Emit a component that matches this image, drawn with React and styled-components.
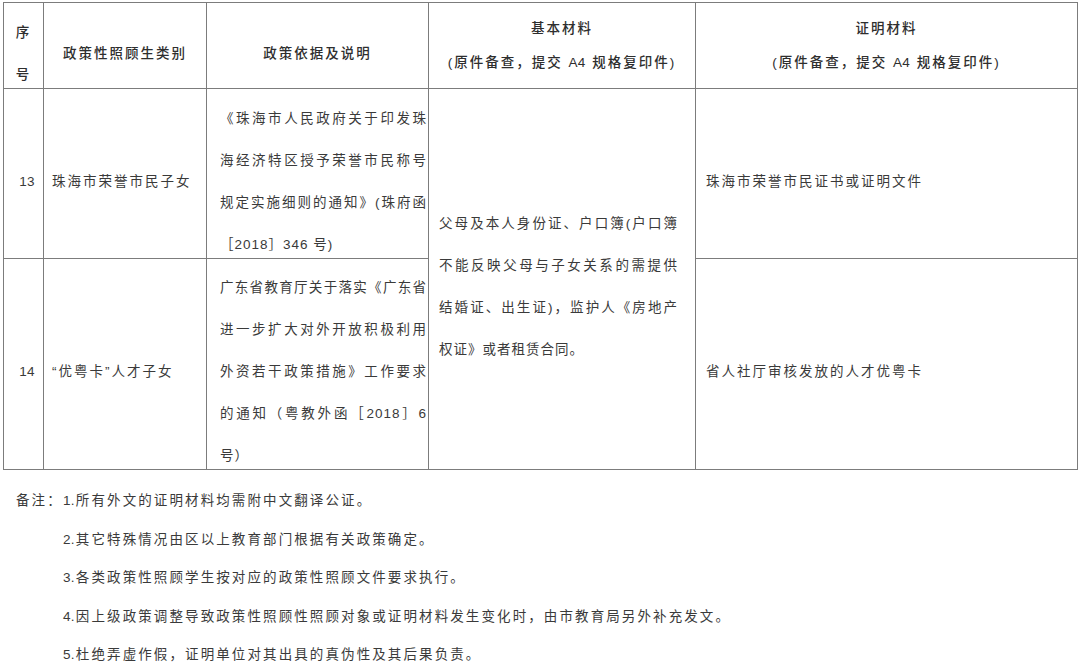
import React from 'react';
import styled, { createGlobalStyle } from 'styled-components';

const GlobalStyle = createGlobalStyle`
  html, body {
    margin: 0;
    padding: 0;
    background: #fff;
  }
  body {
    font-family: "Liberation Sans", "Noto Sans CJK SC", sans-serif;
    color: #3a3a3a;
  }
`;

const Page = styled.div`
  padding: 2px 0 0 3px;
`;

const Table = styled.table`
  border-collapse: collapse;
  table-layout: fixed;
  width: 1074px;
  font-size: 13.5px;
`;

const Col = styled.col`
  width: ${p => p.$w}px;
`;

const Row = styled.tr`
  height: ${p => p.$h}px;
`;

const HeadCell = styled.th`
  border: 1px solid #7c7c7c;
  padding: 0;
  text-align: center;
  vertical-align: middle;
  font-weight: 500;
  color: #2e2e2e;
  letter-spacing: 2px;
  line-height: ${p => p.$lh || 42}px;
`;

const HeadText = styled.div`
  margin: ${p => (p.$shift ? '8px 0 -8px' : '0')};
`;

const Cell = styled.td`
  border: 1px solid #7c7c7c;
  padding: 0 ${p => p.$pr || 0}px 0 ${p => p.$pl || 0}px;
  text-align: ${p => p.$align || 'left'};
  vertical-align: middle;
`;

const Lines = styled.div`
  line-height: 42px;
  margin: 8px 0 -8px;
  letter-spacing: ${p => p.$ls ?? 2}px;
`;

const Line = styled.div`
  text-align-last: ${p => (p.$fill ? 'justify' : 'auto')};
`;

const Num = styled.span`
  letter-spacing: 0.3px;
  margin-right: 1px;
`;

const Notes = styled.div`
  display: grid;
  grid-template-columns: 47px 1fr;
  margin-top: 12px;
  padding-left: 13px;
  font-size: 13.5px;
  letter-spacing: 2.1px;
  line-height: 38.5px;
`;

const NoteLabel = styled.div`
  white-space: nowrap;
`;

const NoteList = styled.div`
  display: flex;
  flex-direction: column;
`;

const Para = ({ lines, fill = [], ls }) => (
  <Lines $ls={ls}>
    {lines.map((t, i) => (
      <Line key={i} $fill={fill.includes(i)}>{t}</Line>
    ))}
  </Lines>
);

const notes = [
  ['1.', '所有外文的证明材料均需附中文翻译公证。'],
  ['2.', '其它特殊情况由区以上教育部门根据有关政策确定。'],
  ['3.', '各类政策性照顾学生按对应的政策性照顾文件要求执行。'],
  ['4.', '因上级政策调整导致政策性照顾性照顾对象或证明材料发生变化时，由市教育局另外补充发文。'],
  ['5.', '杜绝弄虚作假，证明单位对其出具的真伪性及其后果负责。'],
];

const Sub = () => (
  <>(原件备查，提交 <Num>A4</Num> 规格复印件)</>
);

export default function App() {
  return (
    <Page>
      <GlobalStyle />
      <Table>
        <colgroup>
          <Col $w={40} />
          <Col $w={163} />
          <Col $w={222} />
          <Col $w={267} />
          <Col $w={382} />
        </colgroup>
        <thead>
          <Row $h={86}>
            <HeadCell>
              <HeadText $shift>序<br />号</HeadText>
            </HeadCell>
            <HeadCell>
              <HeadText $shift>政策性照顾生类别</HeadText>
            </HeadCell>
            <HeadCell>
              <HeadText $shift>政策依据及说明</HeadText>
            </HeadCell>
            <HeadCell $lh={34}>
              <HeadText>基本材料<br /><Sub /></HeadText>
            </HeadCell>
            <HeadCell $lh={34}>
              <HeadText>证明材料<br /><Sub /></HeadText>
            </HeadCell>
          </Row>
        </thead>
        <tbody>
          <Row $h={170}>
            <Cell $align="center" $pl={7}>
              <Para lines={['13']} ls={0.3} />
            </Cell>
            <Cell $pl={8}>
              <Para lines={['珠海市荣誉市民子女']} />
            </Cell>
            <Cell $pl={13} $pr={1}>
              <Para
                ls={1}
                fill={[0, 1, 2]}
                lines={[
                  '《珠海市人民政府关于印发珠',
                  '海经济特区授予荣誉市民称号',
                  '规定实施细则的通知》(珠府函',
                  '［2018］346 号)',
                ]}
              />
            </Cell>
            <Cell rowSpan={2} $pl={10} $pr={17}>
              <Para
                ls={1}
                fill={[0, 1, 2]}
                lines={[
                  '父母及本人身份证、户口簿(户口簿',
                  '不能反映父母与子女关系的需提供',
                  '结婚证、出生证)，监护人《房地产',
                  '权证》或者租赁合同。',
                ]}
              />
            </Cell>
            <Cell $pl={10}>
              <Para lines={['珠海市荣誉市民证书或证明文件']} />
            </Cell>
          </Row>
          <Row $h={211}>
            <Cell $align="center" $pl={7}>
              <Para lines={['14']} ls={0.3} />
            </Cell>
            <Cell $pl={8}>
              <Para lines={['“优粤卡”人才子女']} />
            </Cell>
            <Cell $pl={13} $pr={1}>
              <Para
                ls={1}
                fill={[0, 1, 2, 3]}
                lines={[
                  '广东省教育厅关于落实《广东省',
                  '进一步扩大对外开放积极利用',
                  '外资若干政策措施》工作要求',
                  '的通知（粤教外函［2018］6',
                  '号）',
                ]}
              />
            </Cell>
            <Cell $pl={10}>
              <Para lines={['省人社厅审核发放的人才优粤卡']} />
            </Cell>
          </Row>
        </tbody>
      </Table>
      <Notes>
        <NoteLabel>备注：</NoteLabel>
        <NoteList>
          {notes.map(([n, t]) => (
            <div key={n}><Num>{n}</Num>{t}</div>
          ))}
        </NoteList>
      </Notes>
    </Page>
  );
}
